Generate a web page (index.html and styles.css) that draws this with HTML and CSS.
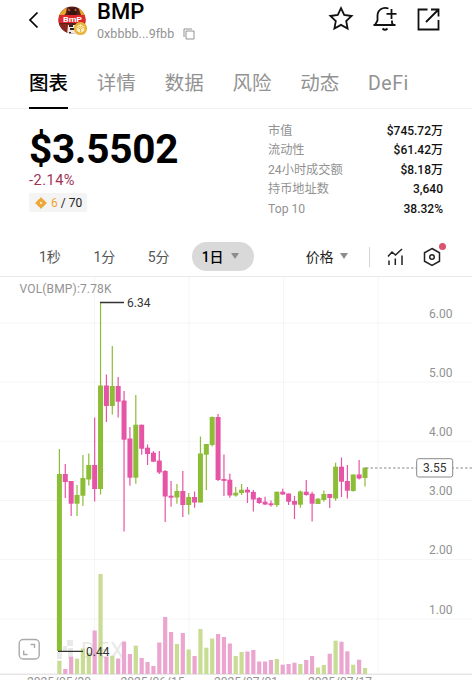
FILE: index.html
```
<!DOCTYPE html>
<html lang="zh-CN">
<head>
    <meta charset="UTF-8">
    <meta name="viewport" content="width=device-width, initial-scale=1.0">
    <title>BMP</title>
    <link rel="stylesheet" href="styles.css">
</head>
<body>
    <header class="header">
        <svg class="back" width="12" height="18" viewBox="0 0 12 18"><path d="M9.5 1.5 2 9l7.5 7.5"/></svg>
        <svg class="logo" width="30" height="30" viewBox="0 0 30 30">
            <defs><clipPath id="coin"><circle cx="14" cy="14" r="13.5"/></clipPath></defs>
            <g clip-path="url(#coin)">
                <rect width="30" height="30" fill="#5b2018"/>
                <path d="M0 0h9l-1 7-4 5H0zM20 0h9v12l-6-3z" fill="#e8a52e"/>
                <path d="M9 4l3-3 2 2 3-2 3 3-2 5h-7z" fill="#381511"/>
                <path d="M10 3l2 2M17 3l1 2" stroke="#b94c36" stroke-width="2"/>
                <path d="M0 18h11v10H0z" fill="#8b241d"/>
                <path d="M10 19h9v10H9z" fill="#eee9e6"/>
                <path d="M11 20h4M12 23h5M11 27h2" stroke="#34231f" stroke-width="2"/>
                <rect y="9" width="30" height="8" fill="#e0272b"/>
            </g>
            <text x="14.5" y="16" text-anchor="middle" textLength="19" lengthAdjust="spacingAndGlyphs" class="logo-text">BmP</text>
            <circle cx="22.5" cy="22.5" r="6.6" fill="#e9b43c"/>
            <path d="M22.5 18.3l3.8 2.2v4.2l-3.8 2.2-3.8-2.2v-4.2z" fill="#fff1c7"/>
            <path d="M19 21l3.5 2 3.5-2M22.5 23v3.5M20.5 20l2 1 2-1" fill="none" stroke="#e9b43c"/>
        </svg>
        <div class="token">
            <div class="token-name">BMP</div>
            <div class="token-address">
                <span>0xbbbb...9fbb</span>
                <svg width="12" height="12" viewBox="0 0 12 12"><path d="M3 3h8v8H3zM1 9V1h8"/></svg>
            </div>
        </div>
        <div class="header-actions">
            <svg width="26" height="26" viewBox="0 0 26 26"><path d="M13 2.2l3.2 6.8 7.4 1-5.4 5.1 1.4 7.4L13 18.9l-6.600 3.600 1.400-7.400L2.400 10l7.400-1z"/></svg>
            <svg width="26" height="26" viewBox="0 0 26 26"><path d="M16.5 2.5C10.5.5 5.5 4 5.5 10v4.5L3 19M1.5 19h22M20 14.500V17l1.200 2M19.500 3v10M14.500 7.800h10M10.500 22.500q2.500 2.500 5 0"/></svg>
            <svg width="26" height="26" viewBox="0 0 26 26"><path d="M12.500 3.500H3.500v20h20V14M16 3.500h7.500v7M23.500 3.500 11 16"/></svg>
        </div>
    </header>

    <nav class="tabs">
        <span class="tab active">图表</span>
        <span class="tab">详情</span>
        <span class="tab">数据</span>
        <span class="tab">风险</span>
        <span class="tab">动态</span>
        <span class="tab latin">DeFi</span>
    </nav>

    <section class="summary">
        <div class="price-box">
            <div class="price">$3.5502</div>
            <div class="change">-2.14%</div>
            <div class="badge">
                <svg width="12" height="12" viewBox="0 0 12 12"><circle cx="6" cy="6" r="4.200" fill="#eda638"/><path d="M6 0l2 2.500L12 6 8 9.500 6 12 4 9.500 0 6l4-3.500z" fill="#eda638"/><path d="M6 4.600L7.400 6 6 7.400 4.600 6z" fill="#f8f0e2"/></svg>
                <span><b>6</b> / 70</span>
            </div>
        </div>
        <div class="stats">
            <div class="stat"><span>市值</span><strong>$745.72万</strong></div>
            <div class="stat"><span>流动性</span><strong>$61.42万</strong></div>
            <div class="stat"><span>24小时成交额</span><strong>$8.18万</strong></div>
            <div class="stat"><span>持币地址数</span><strong>3,640</strong></div>
            <div class="stat"><span>Top 10</span><strong>38.32%</strong></div>
        </div>
    </section>

    <div class="toolbar">
        <div class="periods">
            <span>1秒</span>
            <span>1分</span>
            <span>5分</span>
        </div>
        <div class="period-active">1日 <i class="arrow"></i></div>
        <div class="price-type">价格 <i class="arrow"></i></div>
        <div class="tools">
            <svg width="18" height="18" viewBox="0 0 18 18"><path d="M1 8.500l4-4.500 3.500 3L15 1M2 12.500V17M8.300 10.500V17M15 7.500V17"/></svg>
            <div class="settings">
                <svg width="18" height="20" viewBox="0 0 18 20"><path d="M9 1.500l7.500 4.300v8.400L9 18.500l-7.500-4.300V5.800z"/><circle cx="9" cy="10" r="2.300"/></svg>
                <i class="dot"></i>
            </div>
        </div>
    </div>

    <svg class="chart" id="chart" width="472" height="404" viewBox="0 276 472 404"></svg>

    <script>
        // [direction, high, bodyTop, bodyBottom, low, volumeTop]
        const candles = [
            ['u', 449, 474, 651, 651, 660.7],
            ['d', 464, 474, 482, 498, 669],
            ['d', 481, 481, 503.7, 516, 656.7],
            ['u', 485, 495, 503.7, 516, 658.7],
            ['u', 455, 478, 495.7, 506, 648.5],
            ['u', 453.5, 465, 479.5, 485.5, 653],
            ['d', 417.5, 465, 489, 501.5, 630.5],
            ['u', 302.5, 385.5, 489, 494.5, 574],
            ['d', 374.5, 385.5, 406, 422, 656.7],
            ['u', 346, 386, 406, 414.7, 655.7],
            ['d', 377, 386, 401.7, 417.5, 658.5],
            ['d', 391, 400.5, 439.7, 531.5, 641.5],
            ['d', 427, 438.5, 477.7, 485.7, 654],
            ['u', 395, 424.7, 477.7, 483.7, 645.7],
            ['d', 424.7, 424.7, 448.7, 454.7, 658],
            ['d', 444.5, 447.7, 454, 465, 662],
            ['d', 451, 452.7, 461.7, 462, 666],
            ['d', 451, 460.5, 472.5, 474, 642.5],
            ['d', 470, 471, 496.5, 522, 617],
            ['d', 481, 495.7, 497.7, 506.7, 632],
            ['u', 484, 491, 497.5, 503.7, 644],
            ['d', 471, 491, 505, 517, 633],
            ['u', 493, 497, 505, 514.5, 649.5],
            ['d', 491.5, 497, 502.5, 507.7, 656],
            ['u', 436.5, 453.5, 502.5, 502.5, 629],
            ['u', 444, 444, 454.7, 490, 647.7],
            ['u', 416.5, 417, 445, 446.5, 638.5],
            ['d', 414, 417, 480, 481, 634],
            ['d', 454.5, 479, 480.9, 496, 637],
            ['d', 473.7, 479.7, 495.5, 497.7, 643.5],
            ['u', 487, 492.7, 495.5, 496.7, 656],
            ['u', 484, 489.7, 493, 495, 652],
            ['d', 487, 489.7, 492.5, 503, 651.5],
            ['d', 490, 491.9, 499.5, 511.5, 650],
            ['d', 497, 498, 503, 504, 661.5],
            ['d', 496.7, 501.7, 504.5, 505, 661.5],
            ['d', 500.5, 503.3, 505.2, 506.7, 660],
            ['u', 491.7, 491.7, 505, 507, 659],
            ['d', 488.7, 491.7, 494.5, 495, 664.7],
            ['d', 493.5, 493.5, 501.7, 505, 664],
            ['d', 496, 501, 504.7, 519, 662.7],
            ['u', 490.5, 491.5, 504.7, 507.7, 664],
            ['d', 480, 491.7, 495, 495.7, 660],
            ['d', 491.7, 493.7, 503.7, 521.5, 656],
            ['u', 498, 498.7, 504, 504, 667.5],
            ['u', 490.5, 494, 500, 501.7, 665],
            ['d', 494, 494, 498, 508, 653.7],
            ['u', 462.7, 466.7, 498.5, 500.7, 640.7],
            ['d', 457.5, 466.7, 481.7, 497, 641.7],
            ['d', 465, 481, 490.7, 498.5, 651.3],
            ['u', 474.5, 474.5, 491, 491.7, 664.7],
            ['d', 460, 474.5, 478.5, 479.5, 659.7],
            ['u', 467, 467.7, 478, 486.5, 668]
        ];
        const gridX = [94.5, 189, 283.5, 378];
        const gridY = [323, 382, 441.3, 500.5, 559.5, 619];
        const dates = [['2025/05/30', 27], ['2025/06/15', 120.5], ['2025/07/01', 214], ['2025/07/17', 308]];

        let out = '<path class="axis" d="M0 276.5h472"/>';
        gridX.forEach(x => out += `<path class="grid" d="M${x} 277V674"/>`);
        gridY.forEach((y, i) => {
            out += `<path class="grid" d="M0 ${y}h472"/>`;
            out += `<text class="label" x="452.5" y="${y - 5.5}" text-anchor="end">${6 - i}.00</text>`;
        });
        out += '<path class="base" d="M0 674.2h472"/>';

        // Watermark
        out += '<g class="watermark"><path d="M57 641h5v5h-5zM63 646h4v5h-4zM67 640h6v6h-6zM68 648h5v11h-5zM57 652h5v7h-5z"/><text x="81" y="658" textLength="43">DEX</text></g>';

        // Volume bars first, candles on top
        candles.forEach((c, i) => {
            const x = 59.4 + i * 5.877;
            out += `<rect class="vol-${c[0]}" x="${x - 2.1}" y="${c[5]}" width="4.2" height="${674 - c[5]}"/>`;
        });
        candles.forEach((c, i) => {
            const x = 59.4 + i * 5.877;
            out += `<rect class="${c[0]}" x="${x - 0.6}" y="${c[1]}" width="1.2" height="${c[4] - c[1]}"/>`;
            out += `<rect class="${c[0]}" x="${x - 2.5}" y="${c[2]}" width="5" height="${c[3] - c[2]}"/>`;
        });

        out += '<text class="label" x="19.5" y="293" textLength="92">VOL(BMP):7.78K</text>';
        out += '<path class="mark" d="M100 302.5h24M58 651.3h25"/>';
        out += '<text class="mark-text" x="127" y="307" textLength="23.5">6.34</text>';
        out += '<text class="mark-text" x="86" y="656" textLength="23.5">0.44</text>';

        // Current price
        out += '<path class="current" d="M366 468h106"/>';
        out += '<rect class="tag" x="416.7" y="458.7" width="36" height="18.3" rx="2"/>';
        out += '<text class="mark-text" x="434.7" y="472" text-anchor="middle">3.55</text>';

        dates.forEach(d => out += `<text class="label" x="${d[1]}" y="686" textLength="64">${d[0]}</text>`);

        // Fullscreen button
        out += '<rect class="full" x="19.2" y="639.5" width="20" height="19.5" rx="4"/><path class="full" d="M30.5 644.5h4v3.5M23.7 650.5v4H27.5"/>';

        document.getElementById('chart').innerHTML = out;
    </script>
</body>
</html>
```
FILE: styles.css
```
* {
    box-sizing: border-box;
}

body {
    margin: 0;
    width: 472px;
    height: 680px;
    overflow: hidden;
    background: #fff;
    color: #000;
    font-family: Roboto, "Noto Sans CJK SC", sans-serif;
}

svg {
    display: block;
    flex-shrink: 0;
}

.header {
    display: flex;
    align-items: flex-start;
    height: 54px;
    padding-left: 28px;
}

.back {
    margin-top: 11px;
    fill: none;
    stroke: #000;
    stroke-width: 1.7;
}

.logo {
    margin: 6px 0 0 18px;
}

.logo-text {
    font-size: 8px;
    font-weight: 700;
    fill: #fff;
}

.token {
    margin-left: 9px;
}

.token-name {
    height: 27px;
    font-size: 22px;
    line-height: 24px;
    font-weight: 500;
    letter-spacing: 0;
}

.token-address {
    display: flex;
    align-items: center;
    gap: 9px;
    font-size: 12.5px;
    line-height: 14px;
    letter-spacing: 0.05px;
    color: #929292;
}

.token-address svg {
    fill: none;
    stroke: #929292;
}

.header-actions {
    display: flex;
    gap: 17.5px;
    margin: 6px 31px 0 auto;
    fill: none;
    stroke: #111;
    stroke-width: 1.8;
}

.tabs {
    display: flex;
    gap: 28.8px;
    height: 55px;
    padding-left: 29px;
    border-bottom: 1px solid #f1f1f1;
}

.tab {
    height: 55px;
    font-size: 19.5px;
    line-height: 59px;
    color: #929292;
}

.tab.active {
    color: #000;
    font-weight: 500;
    border-bottom: 2px solid #000;
}

.tab.latin {
    letter-spacing: 0.5px;
}

.summary {
    display: flex;
    justify-content: space-between;
    height: 124px;
    padding: 0 29px;
}

.price {
    margin-top: 19px;
    height: 43px;
    font-size: 40.5px;
    line-height: 43px;
    font-weight: 700;
    letter-spacing: -0.3px;
}

.change {
    height: 22px;
    font-size: 14.5px;
    line-height: 20px;
    letter-spacing: 0.5px;
    color: #a03256;
}

.badge {
    display: flex;
    align-items: center;
    gap: 4px;
    width: 58px;
    height: 19px;
    padding-left: 6px;
    border-radius: 2px;
    background: #f4f4f4;
    font-size: 12px;
    color: #222;
    white-space: nowrap;
}

.badge b {
    font-weight: 400;
    color: #eda638;
}

.stats {
    width: 175px;
    padding-top: 13px;
}

.stat {
    display: flex;
    justify-content: space-between;
    height: 19.4px;
    font-size: 12.2px;
    line-height: 19.4px;
}

.stat span {
    color: #929292;
}

.stat strong {
    font-size: 12px;
    font-weight: 500;
    color: #111;
}

.toolbar {
    display: flex;
    align-items: center;
    height: 43px;
    padding: 5px 31px 0 39px;
    font-size: 14px;
}

.periods {
    display: flex;
    gap: 32.5px;
    margin-top: -2px;
    color: #555;
}

.period-active {
    display: flex;
    align-items: center;
    gap: 7px;
    width: 62px;
    height: 29px;
    margin-left: 22px;
    margin-top: -1px;
    padding-left: 10px;
    padding-bottom: 1px;
    border-radius: 15px;
    background: #d9d9d9;
    font-weight: 500;
}

.arrow {
    border: 4.5px solid transparent;
    border-top: 6px solid #8d8d8d;
    border-bottom: 0;
}

.price-type {
    display: flex;
    align-items: center;
    gap: 6px;
    margin-left: 52px;
    margin-top: -2px;
    color: #222;
}

.tools {
    display: flex;
    align-items: center;
    gap: 18px;
    height: 20px;
    margin-left: auto;
    padding-left: 17px;
    border-left: 1px solid #d5d5d5;
    fill: none;
    stroke: #222;
    stroke-width: 1.5;
}

.settings {
    position: relative;
}

.dot {
    position: absolute;
    top: -4px;
    right: -5px;
    width: 7px;
    height: 7px;
    border-radius: 50%;
    background: #d9536f;
}

.chart text {
    font-family: Roboto, sans-serif;
    font-size: 12px;
}

.grid {
    stroke: #f5f5f5;
}

.axis {
    stroke: #e9e9e9;
}

.base {
    stroke: #e6e6e6;
    stroke-width: 1.5;
}

.label {
    fill: #929292;
}

.watermark {
    fill: #e9e9e9;
}

.chart .watermark text {
    font-size: 22px;
}

.u {
    fill: #8cbd36;
}

.d {
    fill: #e654a6;
}

.vol-u {
    fill: #c8dc94;
}

.vol-d {
    fill: #eba6d0;
}

.mark {
    stroke: #333;
    stroke-width: 1.3;
}

.mark-text {
    fill: #333;
}

.current {
    stroke: #888;
    stroke-dasharray: 2.5 2;
}

.tag {
    fill: #fff;
    stroke: #888;
}

.full {
    fill: none;
    stroke: #aaa;
    stroke-width: 1.4;
}
```
